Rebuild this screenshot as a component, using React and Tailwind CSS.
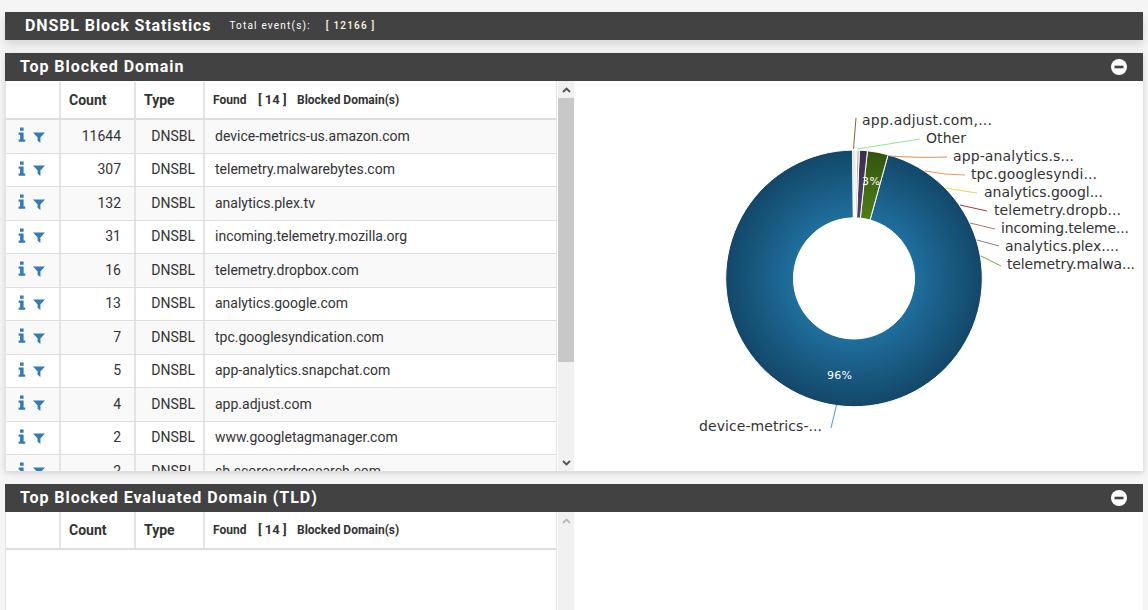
import React from "react";

const rows = [
  ["11644", "device-metrics-us.amazon.com"],
  ["307", "telemetry.malwarebytes.com"],
  ["132", "analytics.plex.tv"],
  ["31", "incoming.telemetry.mozilla.org"],
  ["16", "telemetry.dropbox.com"],
  ["13", "analytics.google.com"],
  ["7", "tpc.googlesyndication.com"],
  ["5", "app-analytics.snapchat.com"],
  ["4", "app.adjust.com"],
  ["2", "www.googletagmanager.com"],
  ["2", "sb.scorecardresearch.com"],
];

const CX = 854;
const CY = 278.4;
const RO = 128.3;
const RI = 60.6;

function pt(r, deg) {
  const a = (deg * Math.PI) / 180;
  return [CX + r * Math.sin(a), CY - r * Math.cos(a)];
}

function slice(a0, a1) {
  const large = a1 - a0 > 180 ? 1 : 0;
  const [x0, y0] = pt(RO, a0);
  const [x1, y1] = pt(RO, a1);
  const [x2, y2] = pt(RI, a1);
  const [x3, y3] = pt(RI, a0);
  return `M${x0} ${y0}A${RO} ${RO} 0 ${large} 1 ${x1} ${y1}L${x2} ${y2}A${RI} ${RI} 0 ${large} 0 ${x3} ${y3}Z`;
}

const slices = [
  [15.4, 359.4, "url(#gBlue)"],
  [6.0, 15.4, "url(#gGreen)"],
  [2.4, 6.0, "url(#gPurple)"],
  [1.3, 2.4, "#b9a6a6"],
  [0.5, 1.3, "#c9d8c9"],
  [359.4, 0.5 + 360, "#d8d8d8"],
];

const labels = [
  ["app.adjust.com,...", 862, 125, 130, "#7a6a3a", "M853.5 149 L856 118"],
  ["Other", 926, 143, 40, "#8fe88f", "M857 149 L920 139"],
  ["app-analytics.s...", 953, 161, 121, "#e08a60", "M890 156 Q915 158 947 157"],
  ["tpc.googlesyndi...", 971, 179, 126, "#f09a50", "M925 171 Q945 175 965 175"],
  ["analytics.googl...", 984, 197, 119, "#e0d850", "M945 188 L977 193"],
  ["telemetry.dropb...", 994, 215, 127, "#a83838", "M960 205 L987 211"],
  ["incoming.teleme...", 1001, 233, 128, "#b87070", "M970 223 L995 229"],
  ["analytics.plex....", 1005, 251, 114, "#8a78a8", "M977 240 L999 246"],
  ["telemetry.malwa...", 1007, 269, 128, "#70b030", "M981 256 L1001 266"],
  ["device-metrics-...", 699, 431, 123, "#4a98d8", "M836.5 405 L831 428"],
];

function Donut() {
  return (
    <svg width="1148" height="400" viewBox="0 81 1148 400" className="block">
      <defs>
        <radialGradient id="gBlue" gradientUnits="userSpaceOnUse" cx={CX} cy={CY} r={RO}>
          <stop offset="0.45" stopColor="#20709f" />
          <stop offset="1" stopColor="#134769" />
        </radialGradient>
        <radialGradient id="gGreen" gradientUnits="userSpaceOnUse" cx={CX} cy={CY} r={RO}>
          <stop offset="0.45" stopColor="#4d8018" />
          <stop offset="1" stopColor="#35540f" />
        </radialGradient>
        <radialGradient id="gPurple" gradientUnits="userSpaceOnUse" cx={CX} cy={CY} r={RO}>
          <stop offset="0.45" stopColor="#524466" />
          <stop offset="1" stopColor="#3a2f49" />
        </radialGradient>
      </defs>
      {slices.map(([a, b, fill], i) => (
        <path key={i} d={slice(a, b)} fill={fill} stroke="#ffffff" strokeWidth="1" />
      ))}
      {labels.map(([t, x, y, w, c, d]) => (
        <g key={t}>
          <path d={d} fill="none" stroke={c} strokeWidth="1" />
          <text
            x={x}
            y={y}
            textLength={w}
            lengthAdjust="spacing"
            fontFamily="'DejaVu Sans', sans-serif"
            fontSize="14"
            fill="#333333"
          >
            {t}
          </text>
        </g>
      ))}
      <text x="827" y="379" textLength="25" fontFamily="'DejaVu Sans', sans-serif" fontSize="11" fill="#ffffff">96%</text>
      <text x="862" y="185" textLength="18" fontFamily="'DejaVu Sans', sans-serif" fontSize="11" fill="#ffffff">3%</text>
    </svg>
  );
}

function InfoIcon() {
  return (
    <svg width="8" height="15" viewBox="0 0 8 15" className="block mb-[3px]">
      <path
        d="M2 0.5h3.6v3.2H2zM0.6 5.4h5v7h1.6v2.3H0.6v-2.3h1.5V7.7H0.6z"
        fill="#337ab7"
      />
    </svg>
  );
}

function FilterIcon() {
  return (
    <svg width="12" height="11" viewBox="0 0 12 11" className="block mt-[2px]">
      <path d="M0 0.5h12L7.4 5.4V11L4.6 8.8V5.4z" fill="#337ab7" />
    </svg>
  );
}

function MinusCircle() {
  return (
    <svg width="16" height="16" viewBox="0 0 16 16" className="block">
      <circle cx="8" cy="8" r="8" fill="#ffffff" />
      <rect x="3.5" y="6.7" width="9" height="2.6" fill="#424242" />
    </svg>
  );
}

function Chevron({ up, color }) {
  return (
    <svg width="9" height="6" viewBox="0 0 9 6" className="block">
      <path
        d={up ? "M1 5L4.5 1.5L8 5" : "M1 1L4.5 4.5L8 1"}
        fill="none"
        stroke={color}
        strokeWidth="1.8"
      />
    </svg>
  );
}

function SectionHeader({ title }) {
  return (
    <div className="h-[28px] bg-[#424242] flex items-center justify-between pl-[15px] pr-[16px]">
      <span className="text-white text-[16px] font-bold tracking-[0.94px] leading-none">{title}</span>
      <MinusCircle />
    </div>
  );
}

function HeaderRow({ tall }) {
  return (
    <div
      className={
        "grid grid-cols-[55px_75px_69px_1fr] border-b-2 border-[#dddddd] bg-white text-[#333333] font-bold " +
        (tall ? "h-[39px] pt-[1px]" : "h-[38px]")
      }
    >
      <div className="border-r-2 border-[#e4e4e4]" />
      <div className="border-r-2 border-[#e4e4e4] flex items-center pl-[8px] text-[14px]">Count</div>
      <div className="border-r-2 border-[#e4e4e4] flex items-center pl-[8px] text-[14px]">Type</div>
      <div className="flex items-center pl-[8px] text-[12px]">
        <span className="w-[45px]">Found</span>
        <span className="w-[39px] text-[13px]">[ 14 ]</span>
        <span>Blocked Domain(s)</span>
      </div>
    </div>
  );
}

export default function App() {
  return (
    <div
      className="h-[610px] overflow-hidden bg-[#f5f5f5] pt-[12px] px-[5px]"
      style={{ fontFamily: "Roboto, sans-serif" }}
    >
      <div className="h-[28px] bg-[#424242] flex items-center pl-[20px] text-white shadow-[0_5px_10px_rgba(0,0,0,0.12)]">
        <span className="text-[16px] font-bold tracking-[0.9px] leading-none">DNSBL Block Statistics</span>
        <span className="ml-[18px] text-[10px] tracking-[1.2px] font-normal leading-none">Total event(s):</span>
        <span className="ml-[15px] text-[10px] tracking-[1.2px] font-medium leading-none text-[#fff8e0]">[ 12166 ]</span>
      </div>

      <div className="mt-[13px] bg-white shadow-[0_2px_6px_rgba(0,0,0,0.15)]">
        <SectionHeader title="Top Blocked Domain" />
        <div className="relative flex h-[390px] overflow-hidden">
          <div className="w-[552px] border-x border-[#e4e4e4] overflow-hidden text-[14px] text-[#333333]">
            <HeaderRow tall />
            {rows.map(([count, domain], i) => (
              <div
                key={i}
                className={
                  "grid grid-cols-[55px_75px_69px_1fr] h-[33.5px] border-b border-[#dddddd] " +
                  (i % 2 === 0 ? "bg-[#f9f9f9]" : "bg-white")
                }
              >
                <div className="border-r-2 border-[#e4e4e4] flex items-center gap-[7px] pl-[12px]">
                  <InfoIcon />
                  <FilterIcon />
                </div>
                <div className="border-r-2 border-[#e4e4e4] flex items-center justify-end pr-[13px]">{count}</div>
                <div className="border-r-2 border-[#e4e4e4] flex items-center justify-end pr-[8px]">DNSBL</div>
                <div className="flex items-center pl-[10px]">{domain}</div>
              </div>
            ))}
          </div>
          <div className="ml-[1px] w-[16px] bg-[#f1f1f1] flex flex-col items-center">
            <div className="h-[17px] flex items-center justify-center">
              <Chevron up color="#505050" />
            </div>
            <div className="w-full h-[264px] bg-[#c8c8c8]" />
            <div className="flex-1" />
            <div className="h-[17px] flex items-center justify-center">
              <Chevron color="#505050" />
            </div>
          </div>
          <div className="absolute left-[-5px] top-0">
            <Donut />
          </div>
        </div>
      </div>

      <div className="mt-[13px] bg-white h-[126px]">
        <SectionHeader title="Top Blocked Evaluated Domain (TLD)" />
        <div className="flex h-[98px]">
          <div className="w-[552px] border-x border-[#e4e4e4]">
            <HeaderRow />
          </div>
          <div className="ml-[1px] w-[16px] bg-[#f1f1f1] flex flex-col items-center">
            <div className="h-[17px] flex items-center justify-center">
              <Chevron up color="#b8b8b8" />
            </div>
          </div>
        </div>
      </div>
    </div>
  );
}
